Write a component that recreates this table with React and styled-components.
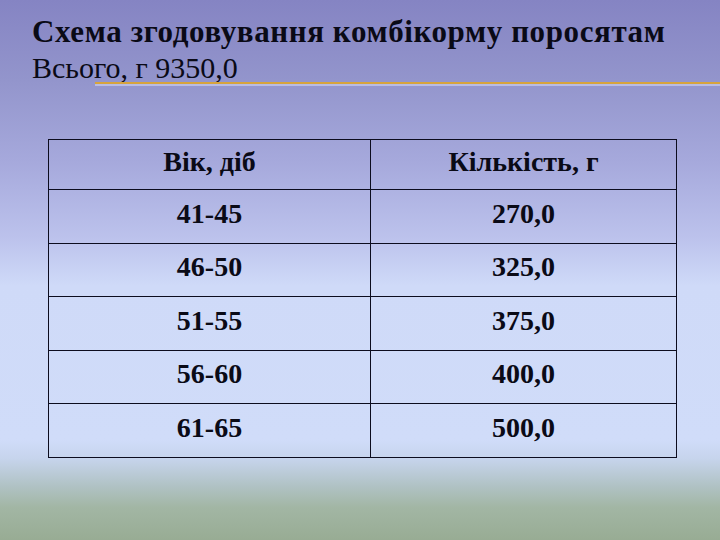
import styled, { createGlobalStyle } from 'styled-components';

const GlobalStyle = createGlobalStyle`
    body {
        margin: 0;
        padding: 0;
    }
`

const serif = `"Liberation Serif", "Times New Roman", serif`;

const Slide = styled.div`
    width: 720px;
    height: 540px;
    overflow: hidden;
    box-sizing: border-box;
    padding: 14px 0 0 32px;
    font-family: ${serif};
    color: #0a0a16;
    background: linear-gradient(
        180deg,
        #8584c3 0%,
        #9395cc 15%,
        #a6a9dc 30%,
        #bcc2ec 44%,
        #cfdaf8 53%,
        #d0dcf9 81.5%,
        #c6d4ec 85%,
        #b0c2c4 90%,
        #a2b6a4 94%,
        #98ac94 100%
    );
`

const Header = styled.header`
    line-height: 36px;
    font-size: 30px;
`

const Title = styled.h1`
    margin: 0;
    font-family: ${serif};
    font-size: 31px;
    letter-spacing: 0.6px;
    line-height: 36px;
    font-weight: 700;
    white-space: nowrap;
`

const Total = styled.p`
    position: relative;
    margin: 0;
    font-family: ${serif};
    font-weight: 400;

    &::after {
        content: '';
        position: absolute;
        left: 63px;
        right: 0;
        top: 32px;
        height: 2px;
        background: #d7a43c;
        box-shadow: 0 2px 0 rgba(230, 236, 255, 0.45);
    }
`

const Table = styled.table`
    margin: 53px 0 0 16px;
    width: 629px;
    border-collapse: collapse;
    table-layout: fixed;
`

const Cell = styled.td`
    border: 1px solid #0c0c1e;
    height: ${p => p.$h}px;
    padding: 0 0 6px;
    box-sizing: border-box;
    text-align: center;
    vertical-align: middle;
    font-family: ${serif};
    font-size: 28px;
    font-weight: 700;
    line-height: 32px;
    color: #0a0a16;
`

const rows = [
    ['41-45', '270,0'],
    ['46-50', '325,0'],
    ['51-55', '375,0'],
    ['56-60', '400,0'],
    ['61-65', '500,0'],
];

const heights = [54, 53, 54, 53, 54];

export default function App() {
    return (
        <>
            <GlobalStyle />
            <Slide>
                <Header>
                    <Title>Схема згодовування комбікорму поросятам</Title>
                    <Total>Всього, г 9350,0</Total>
                </Header>
                <Table>
                    <colgroup>
                        <col style={{ width: 322 }} />
                        <col />
                    </colgroup>
                    <thead>
                        <tr>
                            <Cell as="th" $h={50}>Вік, діб</Cell>
                            <Cell as="th" $h={50}>Кількість, г</Cell>
                        </tr>
                    </thead>
                    <tbody>
                        {rows.map(([age, amount], i) => (
                            <tr key={age}>
                                <Cell $h={heights[i]}>{age}</Cell>
                                <Cell $h={heights[i]}>{amount}</Cell>
                            </tr>
                        ))}
                    </tbody>
                </Table>
            </Slide>
        </>
    );
}
